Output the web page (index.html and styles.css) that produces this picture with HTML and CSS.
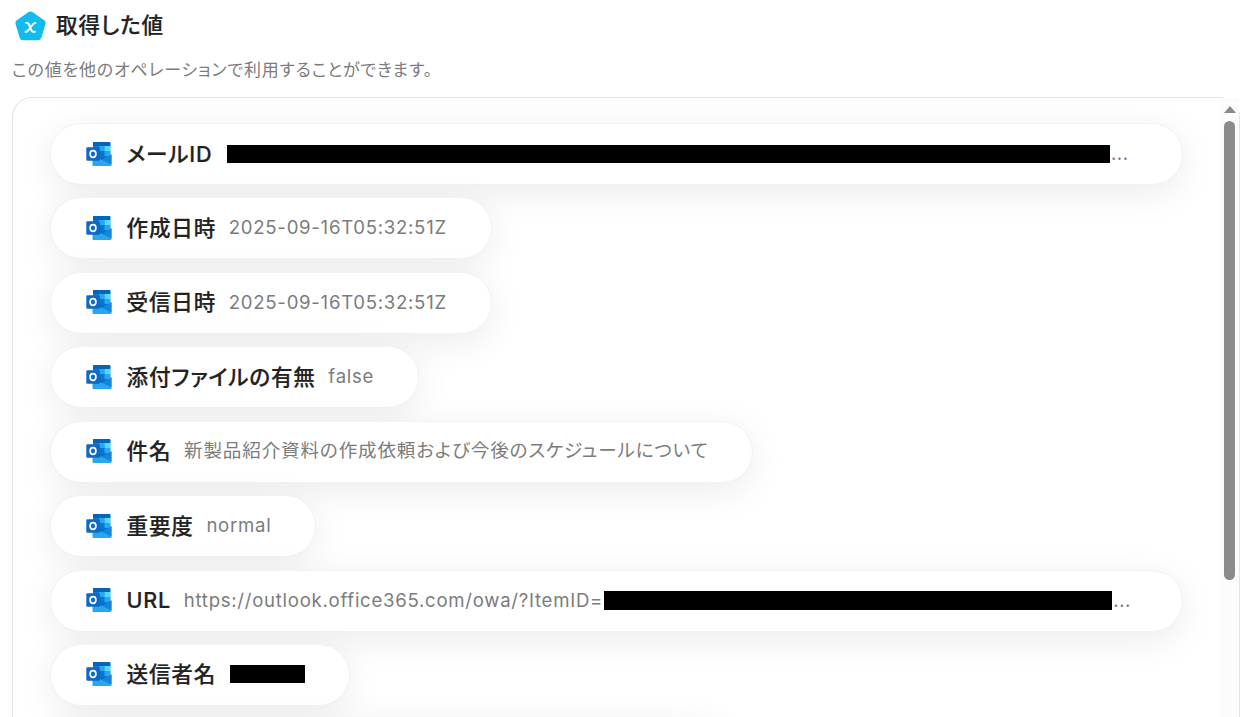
FILE: index.html
```html
<!DOCTYPE html>
<html lang="ja">
<head>
<meta charset="utf-8">
<title>取得した値</title>
<link rel="stylesheet" href="styles.css">
</head>
<body>
<svg class="defs" width="0" height="0" aria-hidden="true">
<symbol id="outlook" viewBox="0 0 26 24">
<path d="M8 0h15.300a1 1 0 0 1 1 1v12l-5 6H7V1a1 1 0 0 1 1-1z" fill="#0a78d0"/>
<path d="M7 1a1 1 0 0 1 1-1h15.300a1 1 0 0 1 1 1v3H7z" fill="#0364b8"/>
<path d="M7 4h6v5H7z" fill="#0f78d4"/>
<path d="M13 4h5.500v5H13z" fill="#28a8ea"/>
<path d="M18.500 4h5.800v5h-5.800z" fill="#50d9ff"/>
<path d="M13 9h5.500v6H13z" fill="#0078d4"/>
<path d="M18.500 9h5.800v5h-5.800z" fill="#28a8ea"/>
<path d="M13 15h8l-5 3h-3z" fill="#0a6cc4"/>
<path d="M6.500 14 16 18l9.500-5.800V23a1 1 0 0 1-1 1h-17a1 1 0 0 1-1-1z" fill="#28a8ea"/>
<path d="M15.500 17.700l10-5.500v10.300z" fill="#1784d9"/>
<rect x=".3" y="5.300" width="13.600" height="13.400" rx="1.200" fill="#0c69c6"/>
<ellipse cx="7" cy="12" rx="2.900" ry="3.300" fill="none" stroke="#fff" stroke-width="1.700"/>
</symbol>
</svg>
<header class="heading">
<svg class="logo" viewBox="0 0 32 30"><path d="M13.700.8q2.300-1.300 4.600 0l11.800 8.200q2 1.500 1.400 3.800l-4.300 14.200q-.9 2.700-3.500 2.700H8.300q-2.600 0-3.500-2.700L.5 12.800q-.6-2.300 1.400-3.800z" fill="#10bcee"/><path d="M11.500 12h1.300q1 0 1.500 1.200l2.800 6.600q.5 1.200 1.700 1.200h1.700M21 12q-1.400-.2-2.400 1.200l-5.200 6.600q-1 1.300-2.600 1.200" fill="none" stroke="#fff" stroke-width="2.100" stroke-linecap="round"/></svg>
<h1>取得した値</h1>
</header>
<p class="description">この値を他のオペレーションで利用することができます。</p>
<main class="panel">
<ul class="values">
<li class="pill wide"><svg class="icon"><use href="#outlook"/></svg><b>メールID</b><span class="mask mask-id"></span><span class="dots">...</span></li>
<li class="pill"><svg class="icon"><use href="#outlook"/></svg><b>作成日時</b><span class="value">2025-09-16T05:32:51Z</span></li>
<li class="pill"><svg class="icon"><use href="#outlook"/></svg><b>受信日時</b><span class="value">2025-09-16T05:32:51Z</span></li>
<li class="pill"><svg class="icon"><use href="#outlook"/></svg><b>添付ファイルの有無</b><span class="value">false</span></li>
<li class="pill"><svg class="icon"><use href="#outlook"/></svg><b>件名</b><span class="value subject">新製品紹介資料の作成依頼および今後のスケジュールについて</span></li>
<li class="pill"><svg class="icon"><use href="#outlook"/></svg><b>重要度</b><span class="value">normal</span></li>
<li class="pill wide"><svg class="icon"><use href="#outlook"/></svg><b>URL</b><span class="value">https://outlook.office365.com/owa/?ItemID=</span><span class="mask mask-url"></span><span class="dots">...</span></li>
<li class="pill"><svg class="icon"><use href="#outlook"/></svg><b>送信者名</b><span class="mask mask-name"></span></li>
<li class="pill next"></li>
</ul>
<div class="scrollbar"><i class="arrow"></i><i class="thumb"></i></div>
</main>
</body>
</html>
```
FILE: styles.css
```css
* { box-sizing: border-box; }
html, body { height: 100%; overflow: hidden; }
body { margin: 0; background: #fff; color: #222; font-family: Inter, "Noto Sans CJK JP", sans-serif; font-feature-settings: "palt"; }
.defs { position: absolute; }
.heading { display: flex; align-items: center; height: 52px; padding-left: 15px; }
.logo { width: 31px; height: 30px; margin-right: 10px; }
h1 { margin: 0 0 2px; font-size: 21.600px; font-weight: 500; letter-spacing: .85px; line-height: 30px; -webkit-text-stroke: .2px; }
.description { margin: 6px 0 0 12px; height: 39px; font-size: 17px; line-height: 24px; color: #7c7c7c; letter-spacing: .8px; white-space: nowrap; }
.panel { display: flex; width: 1228px; height: 620px; margin-left: 12px; border: 1px solid #e3e3e3; border-bottom: 0; border-radius: 20px 20px 0 0; }
.values { flex: 1; height: 619px; overflow: hidden; margin: 0; padding: 25px 0 0 37px; list-style: none; display: flex; flex-direction: column; align-items: flex-start; gap: 12.430px; }
.pill { display: flex; align-items: center; flex: none; height: 62px; padding: 0 44px 0 34.500px; border: 1px solid #f2f2f2; border-radius: 31px; background: #fff; box-shadow: 0 8px 36px rgba(0,0,0,.08); white-space: nowrap; }
.wide { width: 1133px; }
.next { width: 680px; }
.icon { width: 26px; height: 24px; margin: 0 15px 1px 0; flex: none; }
.pill b { font-size: 21.600px; font-weight: 500; letter-spacing: .8px; line-height: 32px; margin: 0 12.700px 1px 0; -webkit-text-stroke: .2px; }
.value { font-size: 18.600px; color: #7c7c7c; letter-spacing: .72px; line-height: 28px; margin-bottom: 2px; }
.subject { letter-spacing: .82px; margin-bottom: 3px; }
.mask { height: 18px; background: #000; flex: none; }
.mask-id { width: 883px; margin-left: 1.500px; }
.mask-url { width: 508px; height: 19px; margin: 0 0 1px .8px; }
.mask-name { width: 75px; margin: 0 0 2px 1px; }
.dots { font-size: 18.600px; color: #7c7c7c; letter-spacing: .5px; margin: 0 0 2px 1.500px; }
.scrollbar { width: 19px; height: 619px; background: #fcfcfc; display: flex; flex-direction: column; align-items: center; padding-top: 8px; }
.arrow { border: 6.500px solid transparent; border-top: 0; border-bottom: 7px solid #8b8b8b; }
.thumb { width: 11px; height: 459px; margin-top: 8px; border-radius: 6px; background: #8b8b8b; }
```
